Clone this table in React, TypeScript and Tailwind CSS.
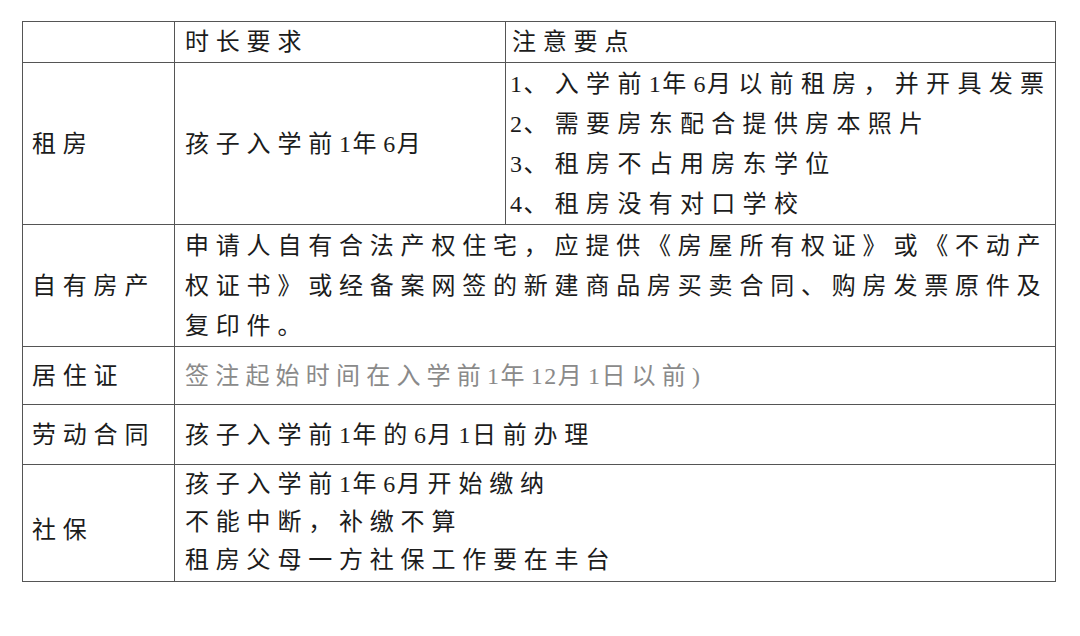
import React from 'react';

// digits sit tight in the reference, CJK glyphs are spaced out
function T({ children }: { children: string }) {
  const parts = children.split(/(\d+)/);
  return (
    <>
      {parts.map((p, i) =>
        /^\d+$/.test(p) ? (
          <span key={i} className="tracking-[1.5px]">{p}</span>
        ) : (
          <React.Fragment key={i}>{p}</React.Fragment>
        )
      )}
    </>
  );
}

export default function App() {
  const font = { fontFamily: '"Liberation Serif", "Noto Sans CJK SC", serif' };
  const cell = 'border-[1.5px] border-[#555] align-middle';
  return (
    <div className="w-[1080px] h-[636px] bg-white pt-[21px] pl-[22px]" style={font}>
      <table className="table-fixed border-collapse w-[1033px] text-[24px] leading-[40px] tracking-[6.8px] text-[#1c1c1c] whitespace-nowrap">
        <colgroup>
          <col className="w-[152px]" />
          <col className="w-[331px]" />
          <col className="w-[550px]" />
        </colgroup>
        <tbody>
          {/* Header */}
          <tr className="h-[41px]">
            <td className={cell}></td>
            <td className={`${cell} pl-[10px]`}>时长要求</td>
            <td className={`${cell} pl-[6px]`}>注意要点</td>
          </tr>

          {/* 租房 */}
          <tr className="h-[161px]">
            <td className={`${cell} pl-[9px]`}>租房</td>
            <td className={`${cell} pl-[10px]`}><T>孩子入学前1年6月</T></td>
            <td className={`${cell} pl-[4px] pt-[1px] tracking-[7.3px]`}>
              <div><T>1、入学前1年6月以前租房，并开具发票</T></div>
              <div><T>2、需要房东配合提供房本照片</T></div>
              <div><T>3、租房不占用房东学位</T></div>
              <div><T>4、租房没有对口学校</T></div>
            </td>
          </tr>

          {/* 自有房产 */}
          <tr className="h-[122px]">
            <td className={`${cell} pl-[9px]`}>自有房产</td>
            <td className={`${cell} pl-[10px]`} colSpan={2}>
              <div>申请人自有合法产权住宅，应提供《房屋所有权证》或《不动产</div>
              <div>权证书》或经备案网签的新建商品房买卖合同、购房发票原件及</div>
              <div>复印件。</div>
            </td>
          </tr>

          {/* 居住证 */}
          <tr className="h-[58px]">
            <td className={`${cell} pl-[9px]`}>居住证</td>
            <td className={`${cell} pl-[10px] text-[#8a8a8a] tracking-[6.2px]`} colSpan={2}>
              <T>签注起始时间在入学前1年12月1日以前)</T>
            </td>
          </tr>

          {/* 劳动合同 */}
          <tr className="h-[60px]">
            <td className={`${cell} pl-[9px]`}>劳动合同</td>
            <td className={`${cell} pl-[10px]`} colSpan={2}>
              <T>孩子入学前1年的6月1日前办理</T>
            </td>
          </tr>

          {/* 社保 */}
          <tr className="h-[117px]">
            <td className={`${cell} pl-[9px] pt-[14px]`}>社保</td>
            <td className={`${cell} pl-[10px] leading-[38px] pb-[2px]`} colSpan={2}>
              <div><T>孩子入学前1年6月开始缴纳</T></div>
              <div>不能中断，补缴不算</div>
              <div>租房父母一方社保工作要在丰台</div>
            </td>
          </tr>
        </tbody>
      </table>
    </div>
  );
}
